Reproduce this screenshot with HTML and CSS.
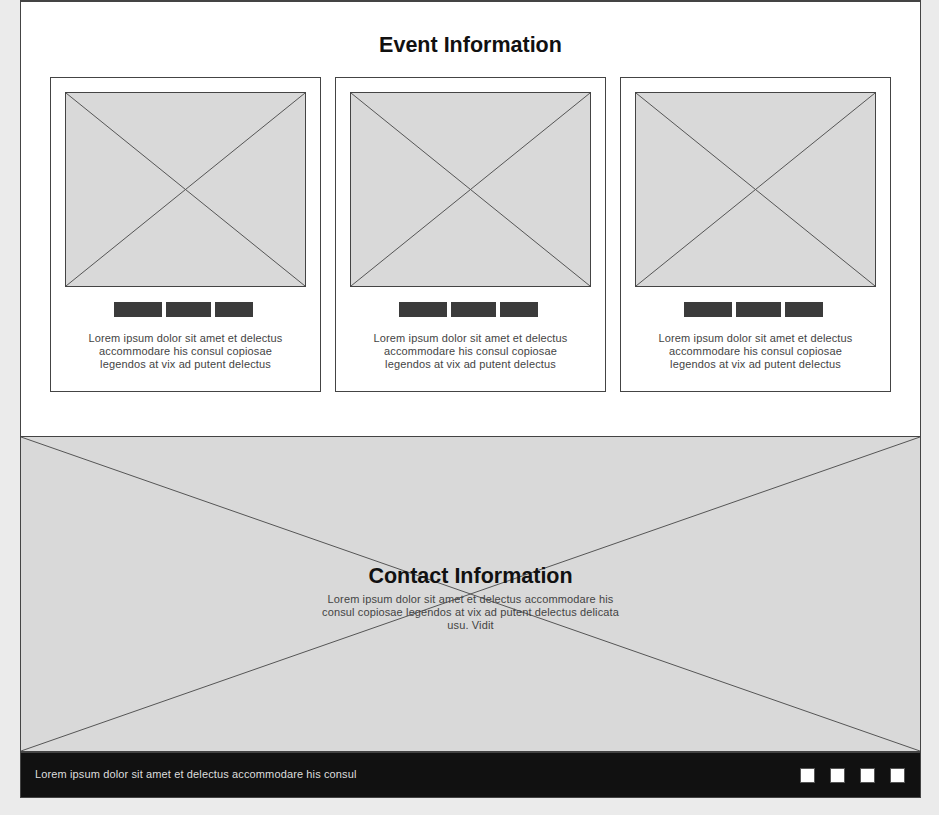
FILE: index.html
```html
<!DOCTYPE html>
<html lang="en">
  <head>
    <meta charset="UTF-8" />
    <meta name="viewport" content="width=device-width, initial-scale=1.0" />
    <title>Event Information</title>
    <link rel="stylesheet" href="styles.css">
  </head>
  <body>
    <div class="page">
      <section class="events">
        <h2 class="section-title">Event Information</h2>
        <div class="cards">
          <div class="card">
            <svg class="placeholder card-image" viewBox="0 0 100 100" preserveAspectRatio="none">
              <line x1="0" y1="0" x2="100" y2="100" vector-effect="non-scaling-stroke" />
              <line x1="100" y1="0" x2="0" y2="100" vector-effect="non-scaling-stroke" />
            </svg>
            <div class="bars">
              <span class="bar bar-1"></span>
              <span class="bar bar-2"></span>
              <span class="bar bar-3"></span>
            </div>
            <p class="card-text">Lorem ipsum dolor sit amet et delectus accommodare his consul copiosae legendos at vix ad putent delectus</p>
          </div>
          <div class="card">
            <svg class="placeholder card-image" viewBox="0 0 100 100" preserveAspectRatio="none">
              <line x1="0" y1="0" x2="100" y2="100" vector-effect="non-scaling-stroke" />
              <line x1="100" y1="0" x2="0" y2="100" vector-effect="non-scaling-stroke" />
            </svg>
            <div class="bars">
              <span class="bar bar-1"></span>
              <span class="bar bar-2"></span>
              <span class="bar bar-3"></span>
            </div>
            <p class="card-text">Lorem ipsum dolor sit amet et delectus accommodare his consul copiosae legendos at vix ad putent delectus</p>
          </div>
          <div class="card">
            <svg class="placeholder card-image" viewBox="0 0 100 100" preserveAspectRatio="none">
              <line x1="0" y1="0" x2="100" y2="100" vector-effect="non-scaling-stroke" />
              <line x1="100" y1="0" x2="0" y2="100" vector-effect="non-scaling-stroke" />
            </svg>
            <div class="bars">
              <span class="bar bar-1"></span>
              <span class="bar bar-2"></span>
              <span class="bar bar-3"></span>
            </div>
            <p class="card-text">Lorem ipsum dolor sit amet et delectus accommodare his consul copiosae legendos at vix ad putent delectus</p>
          </div>
        </div>
      </section>

      <section class="contact">
        <svg class="contact-bg" viewBox="0 0 100 100" preserveAspectRatio="none">
          <line x1="0" y1="0" x2="100" y2="100" vector-effect="non-scaling-stroke" />
          <line x1="100" y1="0" x2="0" y2="100" vector-effect="non-scaling-stroke" />
        </svg>
        <div class="contact-body">
          <h2 class="section-title">Contact Information</h2>
          <p class="contact-text">Lorem ipsum dolor sit amet et delectus accommodare his consul copiosae legendos at vix ad putent delectus delicata usu. Vidit</p>
        </div>
      </section>

      <footer class="footer">
        <span class="footer-text">Lorem ipsum dolor sit amet et delectus accommodare his consul</span>
        <div class="socials">
          <span class="social"></span>
          <span class="social"></span>
          <span class="social"></span>
          <span class="social"></span>
        </div>
      </footer>
    </div>
  </body>
</html>
```

FILE: styles.css
```css
/* page background */
body {
  margin: 0;
  padding: 0;
  background-color: #ebebeb;
  font-family: 'Liberation Sans', Arial, sans-serif;
}

/* wireframe frame */
.page {
  width: 899px;
  margin-left: 20px;
  border-left: 1px solid #444;
  border-right: 1px solid #444;
  border-top: 2px solid #444;
}

.section-title {
  margin: 0;
  font-size: 21.5px;
  line-height: 28px;
  font-weight: bold;
  color: #111;
  text-align: center;
}

/* event cards */
.events {
  background-color: #ffffff;
  padding: 29px 29px 44px;
  border-bottom: 1px solid #444;
}

.cards {
  display: flex;
  justify-content: center;
  gap: 14px;
  margin-top: 18px;
}

.card {
  width: 241px;
  padding: 14px;
  border: 1px solid #444;
  display: flex;
  flex-direction: column;
  align-items: center;
}

.placeholder {
  display: block;
  background-color: #d9d9d9;
  border: 1px solid #444;
}

.placeholder line,
.contact-bg line {
  stroke: #555;
  stroke-width: 1;
}

.card-image {
  width: 239px;
  height: 193px;
}

.bars {
  display: flex;
  gap: 4px;
  margin-top: 15px;
  padding-right: 4px;
}

.bar {
  display: block;
  height: 15px;
  background-color: #3b3b3b;
}

.bar-1 { width: 48px; }
.bar-2 { width: 45px; }
.bar-3 { width: 38px; }

.card-text {
  margin: 15px 0 6px;
  width: 215px;
  font-size: 11px;
  line-height: 13px;
  letter-spacing: 0.13px;
  color: #444;
  text-align: center;
}

/* contact block */
.contact {
  position: relative;
  height: 314px;
  background-color: #d9d9d9;
  display: flex;
  justify-content: center;
  align-items: center;
}

.contact-bg {
  position: absolute;
  top: 0;
  left: 0;
  width: 100%;
  height: 100%;
}

.contact-body {
  position: relative;
  padding-top: 5px;
  display: flex;
  flex-direction: column;
  align-items: center;
}

.contact-text {
  margin: 3px 0 0;
  width: 305px;
  font-size: 11px;
  line-height: 13px;
  letter-spacing: 0.13px;
  color: #444;
  text-align: center;
}

/* footer */
.footer {
  height: 44px;
  background-color: #111;
  border-top: 2px solid #444;
  border-bottom: 1px solid #444;
  padding: 0 15px 0 14px;
  display: flex;
  justify-content: space-between;
  align-items: center;
}

.footer-text {
  font-size: 11px;
  letter-spacing: 0.13px;
  color: #ddd;
  padding-bottom: 3px;
}

.socials {
  display: flex;
  gap: 15px;
}

.social {
  display: block;
  width: 13px;
  height: 13px;
  background-color: #fff;
  border: 1px solid #555;
}
```
